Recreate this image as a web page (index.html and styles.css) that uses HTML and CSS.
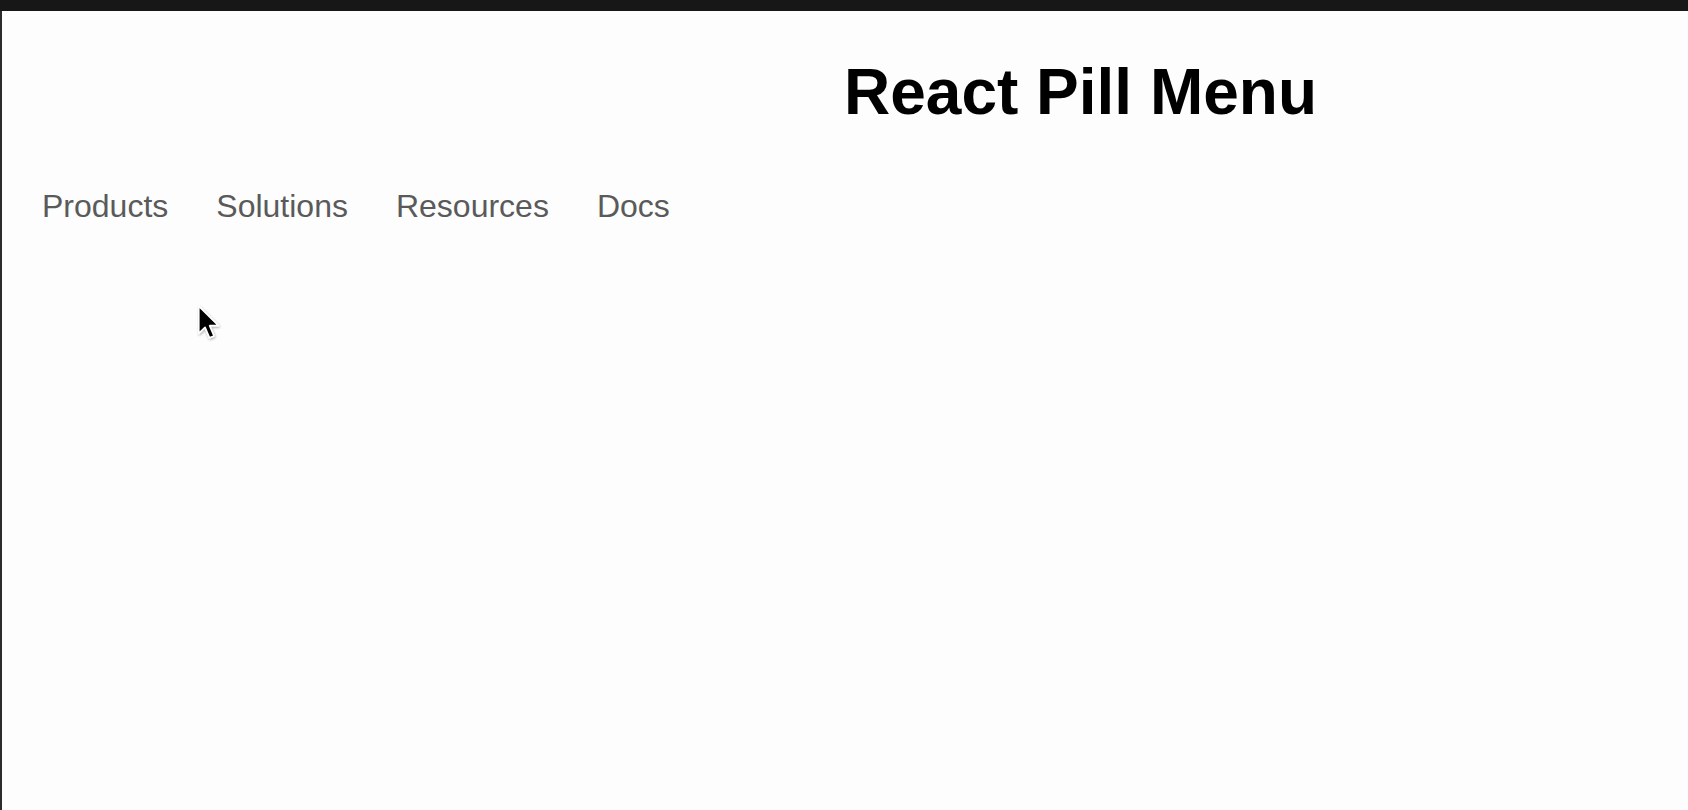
FILE: index.html
```html
<!DOCTYPE html>
<html lang="en">
<head>
<meta charset="utf-8">
<title>React Pill Menu</title>
<link rel="stylesheet" href="styles.css">
</head>
<body>
  <div class="topbar"></div>
  <main class="page">
    <header class="header">
      <h1 class="title">React Pill Menu</h1>
    </header>
    <nav class="nav">
      <a class="nav-item">Products</a>
      <a class="nav-item">Solutions</a>
      <a class="nav-item">Resources</a>
      <a class="nav-item">Docs</a>
    </nav>
    <svg class="cursor" width="26" height="41" viewBox="0 0 22 34">
      <defs>
        <filter id="sh" x="-30%" y="-30%" width="160%" height="160%">
          <feDropShadow dx="0.5" dy="1" stdDeviation="0.8" flood-color="#000" flood-opacity="0.35"/>
        </filter>
      </defs>
      <path d="M1.5 1.5 L1.5 24.5 L6.8 19.4 L10.6 28.3 L14.4 26.7 L10.7 18 L18.2 18 Z" fill="#000" stroke="#fff" stroke-width="1.4" stroke-linejoin="round" filter="url(#sh)"/>
    </svg>
  </main>
</body>
</html>
```

FILE: styles.css
```css
html, body {
  margin: 0;
  padding: 0;
  height: 100%;
  background: #fdfdfd;
  overflow: hidden;
}

body {
  font-family: "Liberation Sans", Arial, Helvetica, sans-serif;
}

.topbar {
  height: 11px;
  background: #171717;
}

.page {
  position: relative;
  box-sizing: border-box;
  height: 799px;
  border-left: 2px solid #2c2c2c;
  background: #fdfdfd;
}

.header {
  display: grid;
  grid-template-columns: 1fr 1fr;
  padding-top: 44px;
}

.title {
  grid-column: 2;
  margin: 0 0 0 -1px;
  font-size: 64px;
  font-weight: 700;
  line-height: normal;
  color: #000;
}

.nav {
  display: flex;
  margin-top: 47px;
  padding-left: 16px;
}

.nav-item {
  padding: 12px 24px;
  font-size: 32px;
  line-height: normal;
  color: #5a5a5a;
  cursor: pointer;
}

.cursor {
  position: absolute;
  left: 195px;
  top: 293px;
}
```
